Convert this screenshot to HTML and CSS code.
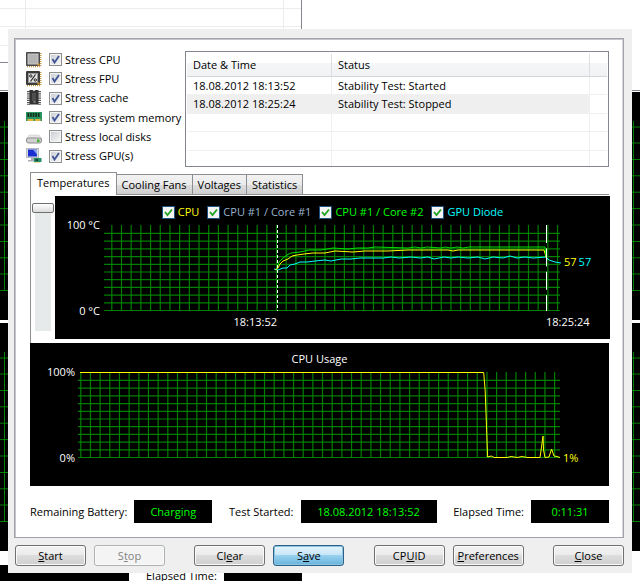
FILE: index.html
```html
<!DOCTYPE html>
<html lang="en">
<head>
    <meta charset="UTF-8">
    <meta name="viewport" content="width=device-width, initial-scale=1.0">
    <title>System Stability Test</title>
    <link rel="stylesheet" href="styles.css">
</head>
<body>
    <!-- Window behind the dialog -->
    <div class="backdrop" aria-hidden="true">
        <div class="back-list">
            <svg width="303" height="90">
                <path d="M0 8.5h301M0 26.5h301M0 45.5h301M25.500 0v62M283.500 0v62" stroke="#ececec" fill="none"/>
                <path d="M0 62.500h301.500V0" stroke="#828790" fill="none"/>
            </svg>
        </div>
        <div class="back-chart">
            <svg viewBox="0 0 640 170" preserveAspectRatio="none">
                <path d="M0 6h640M0 22h640M0 38.500h640M0 54.800h640M0 71.200h640M0 87.600h640M0 104h640M0 120.500h640M0 136.800h640M0 153h640M0 169.500h640M4.500 0v170M633.500 0v170"/>
            </svg>
        </div>
        <div class="back-chart">
            <svg viewBox="0 0 640 170" preserveAspectRatio="none">
                <path d="M0 6h640M0 22h640M0 38.500h640M0 54.800h640M0 71.200h640M0 87.600h640M0 104h640M0 120.500h640M0 136.800h640M0 153h640M0 169.500h640M4.500 0v170M633.500 0v170"/>
            </svg>
        </div>
        <div class="back-status">
            <span class="back-value wide"></span>
            <span class="back-label">Elapsed Time:</span>
            <span class="back-value"></span>
        </div>
    </div>

    <main class="dialog">
        <div class="panel">
            <div class="top-row">
                <ul class="stress-list">
                    <li>
                        <svg class="icon" viewBox="0 0 16 16">
                            <path d="M1 14.500h14M14.700 1v14" stroke="#c79a4a" stroke-width="1.500" stroke-dasharray="1 1" fill="none"/>
                            <rect width="14" height="14" rx="1" fill="#484848"/>
                            <rect x="2" y="2" width="10" height="10" fill="#b4b4b4" stroke="#c8c8c8"/>
                            <rect x="11.500" y="11.500" width="2" height="2" fill="#f0a020"/>
                        </svg>
                        <input type="checkbox" id="cpu" checked><label for="cpu">Stress CPU</label>
                    </li>
                    <li>
                        <svg class="icon" viewBox="0 0 16 16">
                            <path d="M1 14.500h14M14.700 1v14" stroke="#c79a4a" stroke-width="1.500" stroke-dasharray="1 1" fill="none"/>
                            <rect width="14" height="14" rx="1" fill="#3c3c3c"/>
                            <rect x="2.500" y="2.500" width="9" height="9" fill="#e4e4e4" stroke="#999"/>
                            <path d="M9.500 3.500l-5 7" stroke="#222" stroke-width="1.200"/>
                            <circle cx="4.800" cy="5" r="1.200" fill="none" stroke="#222"/>
                            <circle cx="9.300" cy="9" r="1.200" fill="none" stroke="#222"/>
                            <rect x="11.500" y="11.500" width="2" height="2" fill="#f0a020"/>
                        </svg>
                        <input type="checkbox" id="fpu" checked><label for="fpu">Stress FPU</label>
                    </li>
                    <li>
                        <svg class="icon" viewBox="0 0 16 16">
                            <path d="M2.500 1v14M13.500 1v14" stroke="#555" stroke-width="3" stroke-dasharray="1.200 1"/>
                            <rect x="3.500" y="0" width="9" height="14.500" fill="#333"/>
                            <rect x="6" y="3" width="4" height="8" fill="#4e4e4e"/>
                            <path d="M6.500 0h3l-1.500 1.500z" fill="#ccc"/>
                            <rect x="7.500" y="11.500" width="2" height="1" fill="#bbb"/>
                        </svg>
                        <input type="checkbox" id="cache" checked><label for="cache">Stress cache</label>
                    </li>
                    <li>
                        <svg class="icon" viewBox="0 0 16 16">
                            <rect x="0" y="2" width="16" height="9" fill="#2a9461"/>
                            <path d="M1.500 5h13" stroke="#16291e" stroke-width="4" stroke-dasharray="1.600 1"/>
                            <path d="M1.500 10h6M9 10h5.500" stroke="#e3b33c" stroke-width="2"/>
                        </svg>
                        <input type="checkbox" id="memory" checked><label for="memory">Stress system memory</label>
                    </li>
                    <li>
                        <svg class="icon" viewBox="0 0 16 16">
                            <path d="M3 6h10l3 4H0z" fill="#e6e6e6" stroke="#c2c2c2" stroke-width=".5"/>
                            <rect x=".5" y="9" width="15" height="5" rx="2" fill="#d0d0d0" stroke="#8c8c8c"/>
                            <rect x="11" y="10.500" width="2.500" height="2.500" fill="#3fae2e"/>
                        </svg>
                        <input type="checkbox" id="disks"><label for="disks">Stress local disks</label>
                    </li>
                    <li>
                        <svg class="icon" viewBox="0 0 16 16">
                            <rect x=".5" y=".5" width="12" height="9" fill="#d9dde2" stroke="#b5bac0"/>
                            <rect x="2" y="1.500" width="9" height="7" fill="#1c2fd0"/>
                            <path d="M7 1.500h4v5z" fill="#8ea4f0"/>
                            <path d="M5 10h3v2h2v1.500H2V12h3z" fill="#a9aeb5"/>
                            <rect x="8" y="10" width="7.500" height="4" fill="#2a8f68"/>
                            <rect x="9.500" y="11" width="2.500" height="2" fill="#173f33"/>
                            <path d="M8.500 14.500h6" stroke="#d8b54a" stroke-dasharray="1 1"/>
                        </svg>
                        <input type="checkbox" id="gpu" checked><label for="gpu">Stress GPU(s)</label>
                    </li>
                </ul>

                <div class="log">
                    <table>
                        <thead>
                            <tr><th class="col-date">Date &amp; Time</th><th>Status</th><th class="col-end"></th></tr>
                        </thead>
                        <tbody>
                            <tr><td>18.08.2012 18:13:52</td><td>Stability Test: Started</td><td></td></tr>
                            <tr class="selected"><td>18.08.2012 18:25:24</td><td>Stability Test: Stopped</td><td></td></tr>
                            <tr><td></td><td></td><td></td></tr>
                            <tr><td></td><td></td><td></td></tr>
                            <tr><td></td><td></td><td></td></tr>
                        </tbody>
                    </table>
                </div>
            </div>

            <div class="tabs" role="tablist">
                <button class="tab active" role="tab" aria-selected="true">Temperatures</button>
                <button class="tab" role="tab">Cooling Fans</button>
                <button class="tab" role="tab">Voltages</button>
                <button class="tab" role="tab">Statistics</button>
            </div>

            <div class="tab-page">
                <input class="scale" type="range" min="0" max="100" value="0" aria-label="Temperature scale">
                <div class="chart temperature">
                    <div class="legend">
                        <span class="yellow"><input type="checkbox" id="s-cpu" checked><label for="s-cpu">CPU</label></span>
                        <span class="steel"><input type="checkbox" id="s-core1" checked><label for="s-core1">CPU #1 / Core #1</label></span>
                        <span class="green"><input type="checkbox" id="s-core2" checked><label for="s-core2">CPU #1 / Core #2</label></span>
                        <span class="cyan"><input type="checkbox" id="s-gpu" checked><label for="s-gpu">GPU Diode</label></span>
                    </div>
                    <div class="plot-row">
                        <div class="axis"><span>100 °C</span><span>0 °C</span></div>
                        <svg class="plot" viewBox="0 0 458 86" preserveAspectRatio="none">
                            <line class="grid" x1="8.2" y1="43" x2="458" y2="43" stroke-width="86" stroke-dasharray="1.200 8.490"/>
                            <line class="grid" x1="229" y1="7.8" x2="229" y2="86" stroke-width="456" stroke-dasharray="1.200 6.520"/>
                            <polyline class="line-cyan" points="171,44 175,45 180,43 184,43 187,40 192,39 197,37 204,37 212,36 222,35 228,36 238,34 248,34 257,33 270,33 280,33 288,32 296,33 308,32 317,33 325,32 331,34 341,32 348,33 355,32 365,33 375,32 382,34 390,32 400,33 407,31 414,33 422,32 430,33 443,32 446,35 452,37 458,38"/>
                            <polyline class="line-yellow" points="172,45 175,43 177,39 180,36 185,34 189,31 194,30 201,29 210,28 222,28 232,26 250,27 262,26 285,26 305,25 345,25 350,26 355,25 441,25 444,35"/>
                            <polyline class="line-green" points="174,43 176,37 179,34 184,30 188,28 197,27 206,25 218,25 230,23 245,24 254,23 265,23 272,22 305,23 312,22 318,23 324,22 338,23 342,22 348,23 354,22 360,23 366,22 442,22 443,31"/>
                            <line class="mark" x1="174.500" y1="0" x2="174.500" y2="86" stroke-dasharray="3 2"/>
                            <line class="mark" x1="443.500" y1="0" x2="443.500" y2="86" stroke-dasharray="18 5.400"/>
                        </svg>
                        <div class="readout"><span class="yellow">57</span><span class="cyan">57</span></div>
                    </div>
                    <div class="times"><span class="start">18:13:52</span><span class="stop">18:25:24</span></div>
                </div>
            </div>

            <div class="chart usage">
                <div class="chart-title">CPU Usage</div>
                <div class="plot-row">
                    <div class="axis"><span>100%</span><span>0%</span></div>
                    <svg class="plot" viewBox="0 0 483 86" preserveAspectRatio="none">
                        <line class="grid" x1="2.200" y1="43" x2="483" y2="43" stroke-width="86" stroke-dasharray="1.200 8.490"/>
                        <line class="grid" x1="241.500" y1="7.800" x2="241.500" y2="86" stroke-width="483" stroke-dasharray="1.200 6.520"/>
                        <polyline class="line-yellow" points="2,.5 406.500,.5 408,18 410,72 410.500,85 414,84 417,85.500 430,85.500 434,84.500 440,85.500 445,84.500 450,85.500 463,85.500 466,64 466.500,78 468,85.500 472,85 474.500,77 477,84 480,84.500 483,85.500"/>
                    </svg>
                    <div class="readout"><span class="yellow">1%</span></div>
                </div>
            </div>

            <div class="status">
                <div class="field"><span>Remaining Battery:</span><output class="short">Charging</output></div>
                <div class="field"><span>Test Started:</span><output>18.08.2012 18:13:52</output></div>
                <div class="field"><span>Elapsed Time:</span><output class="short">0:11:31</output></div>
            </div>
        </div>

        <div class="buttons">
            <div class="group">
                <button class="btn"><u>S</u>tart</button>
                <button class="btn" disabled>S<u>t</u>op</button>
            </div>
            <div class="group">
                <button class="btn">Cl<u>e</u>ar</button>
                <button class="btn primary">S<u>a</u>ve</button>
            </div>
            <div class="group">
                <button class="btn">CP<u>U</u>ID</button>
                <button class="btn"><u>P</u>references</button>
            </div>
            <div class="group">
                <button class="btn"><u>C</u>lose</button>
            </div>
        </div>
    </main>
</body>
</html>
```
FILE: styles.css
```css
* {
    box-sizing: border-box;
}

body {
    margin: 0;
    position: relative;
    min-height: 100vh;
    display: flow-root;
    background: #fff;
    color: #000;
    font-family: "Open Sans", "Noto Sans", sans-serif;
    font-size: 11px;
    line-height: 14px;
}

button,
input,
output {
    font: inherit;
    margin: 0;
}

/* Window behind the dialog */
.backdrop {
    position: absolute;
    inset: 0;
    overflow: hidden;
    z-index: -1;
}

.back-list {
    height: 91px;
    border-bottom: 1px solid #828790;
    margin-bottom: 1px;
}

.back-list svg {
    display: block;
}

.back-chart {
    height: 228px;
    margin-bottom: 3px;
    padding-top: 29px;
    background: #000;
}

.back-chart svg {
    display: block;
    width: 100%;
    height: 170px;
    fill: none;
    stroke: #008000;
}

.back-status {
    display: flex;
    margin-top: 14px;
}

.back-label {
    padding: 4px 7px 0 17px;
}

.back-value {
    width: 78px;
    height: 23px;
    background: #000;
}

.back-value.wide {
    width: 129px;
}

/* Dialog */
.dialog {
    margin: 29px 8px 8px;
    padding: 9px 8px 7px 6px;
    background: #efefef;
}

.panel {
    padding-bottom: 14px;
    background: #fff;
    border: 1px solid #a0a3ac;
    box-shadow: inset 1px 1px 0 #c4c6cc, inset -1px 0 0 #d8d8dc;
}

.top-row {
    display: flex;
    padding: 12px 14px 0 11px;
}

.stress-list {
    width: 159px;
    height: 116px;
    margin: -1px 0 0;
    padding: 0;
    list-style: none;
    display: flex;
    flex-direction: column;
    justify-content: space-between;
}

.stress-list li {
    display: flex;
    align-items: center;
    flex: 1;
    white-space: nowrap;
}

.icon {
    width: 16px;
    height: 16px;
    margin-right: 7px;
}

input[type="checkbox"] {
    appearance: none;
    width: 13px;
    height: 13px;
    margin-right: 3px;
    border: 1px solid #8e8f8f;
    background: linear-gradient(135deg, #cbcfd5, #f6f6f6) center / 9px 9px no-repeat #f4f4f4;
}

.stress-list input:checked {
    background: url("data:image/svg+xml,%3Csvg xmlns='http://www.w3.org/2000/svg' viewBox='0 0 11 11'%3E%3Cpath d='M2.500 5l2 3.500L9 2' fill='none' stroke='%233f5596' stroke-width='1.800'/%3E%3C/svg%3E") center / 11px 11px no-repeat, linear-gradient(135deg, #cbcfd5, #f6f6f6) center / 9px 9px no-repeat #f4f4f4;
}

/* Event log */
.log {
    flex: 1;
    height: 116px;
    padding: 2px 1px;
    border: 1px solid #828790;
    overflow: hidden;
}

.log table {
    width: 100%;
    table-layout: fixed;
    border-collapse: separate;
    border-spacing: 0;
}

.log th,
.log td {
    height: 18px;
    padding: 0 6px;
    text-align: left;
    font-weight: normal;
    border-right: 1px solid #f0f0f0;
    border-bottom: 1px solid #f0f0f0;
}

.log th {
    height: 23px;
    border-right-color: #dcdee1;
    border-bottom-color: #d5d5d5;
    background: linear-gradient(#fff 40%, #f5f6f8 42%, #f1f2f4);
}

.log tr:nth-child(even) td {
    height: 19px;
}

.log th:last-child,
.log td:last-child {
    border-right: none;
}

.log tbody tr:last-child td {
    height: 16px;
    border-bottom: none;
}

.col-date {
    width: 145px;
}

.col-end {
    width: 17px;
}

.selected td:not(:last-child) {
    background: #efefef;
}

/* Tabs */
.tabs {
    display: flex;
    align-items: flex-end;
    height: 22px;
    margin: 5px 14px 0 15px;
}

.tab {
    height: 20px;
    padding: 0 5px;
    color: #000;
    border: 1px solid #8c8e94;
    border-left: none;
    border-bottom: none;
    background: linear-gradient(#f2f2f2, #ebebeb 50%, #dddddd 50%, #cfcfcf);
}

.tab.active {
    height: 23px;
    margin-bottom: -1px;
    padding: 0 6px 3px;
    border-left: 1px solid #8c8e94;
    background: #fff;
    z-index: 1;
}

.tab-page {
    display: flex;
    margin: 0 14px 0 15px;
    padding: 1px 0 4px 1px;
    border-top: 1px solid #8c8e94;
    border-left: 1px solid #8c8e94;
}

.scale {
    appearance: none;
    writing-mode: vertical-lr;
    width: 22px;
    height: 128px;
    margin: 7px 1px 0 0;
    background: linear-gradient(#e6eaea, #e6eaea) center / 16px 100% no-repeat;
}

.scale::-webkit-slider-thumb {
    appearance: none;
    width: 22px;
    height: 10px;
    border: 1px solid #6f6f6f;
    border-radius: 2px;
    background: linear-gradient(#fff, #dcdcdc);
}

/* Charts */
.chart {
    background: #000;
    color: #fff;
    height: 143px;
}

.temperature {
    flex: 1;
}

.usage {
    margin: 0 14px 0 15px;
}

.legend {
    display: flex;
    justify-content: center;
    gap: 8px;
    padding-top: 9px;
    height: 22px;
}

.legend span {
    display: flex;
    align-items: center;
    height: 14px;
}

.legend input[type="checkbox"] {
    border-color: #1c5180;
    background: #f4f4f4;
}

.legend input:checked {
    background: url("data:image/svg+xml,%3Csvg xmlns='http://www.w3.org/2000/svg' viewBox='0 0 11 11'%3E%3Cpath d='M2 5l2.500 3L9 2.500' fill='none' stroke='%2321a121' stroke-width='1.800'/%3E%3C/svg%3E") center / 11px 11px no-repeat #f4f4f4;
}

.chart-title {
    height: 22px;
    padding-top: 9px;
    text-align: center;
}

.plot-row {
    display: flex;
    height: 100px;
}

.axis {
    display: flex;
    flex-direction: column;
    justify-content: space-between;
    width: 48px;
    padding-right: 3px;
    text-align: right;
}

.plot {
    flex: 1;
    min-width: 0;
    height: 86px;
    margin: 7px 0;
    fill: none;
}

.grid {
    stroke: #008000;
}

.mark {
    stroke: #fff;
}

.line-yellow {
    stroke: #ffff00;
}

.line-green {
    stroke: #00e000;
}

.line-cyan {
    stroke: #00ffff;
}

.readout {
    display: flex;
    gap: 2px;
    width: 49px;
    padding: 37px 0 0 3px;
}

.usage .readout {
    padding-top: 86px;
}

.times {
    display: grid;
    grid-template-columns: minmax(0, 174fr) minmax(0, 269fr) minmax(0, 15fr);
    margin: -3px 49px 0 48px;
    white-space: nowrap;
}

.start {
    text-align: right;
}

.stop {
    grid-column: 3;
}

.yellow {
    color: #ffff00;
}

.steel {
    color: #99b4d1;
}

.green {
    color: #00ff00;
}

.cyan {
    color: #00ffff;
}

/* Status line */
.status {
    display: flex;
    justify-content: space-between;
    margin: 14px 14px 0 15px;
}

.field {
    display: flex;
    align-items: center;
    gap: 7px;
}

.field output {
    width: 136px;
    height: 23px;
    line-height: 23px;
    text-align: center;
    background: #000;
    color: #00ff00;
}

.field .short {
    width: 78px;
}

/* Buttons */
.buttons {
    display: flex;
    justify-content: space-between;
    padding: 7px 0 0 1px;
}

.group {
    display: flex;
    gap: 8px;
}

.btn {
    width: 71px;
    height: 21px;
    padding: 0;
    color: #000;
    border: 1px solid #707070;
    border-radius: 3px;
    background: linear-gradient(#f2f2f2, #ebebeb 50%, #dddddd 50%, #cfcfcf);
    box-shadow: inset 0 0 0 1px #fafafa;
}

.btn:disabled {
    color: #838383;
    border-color: #adb2b5;
    background: #f4f4f4;
}

.btn.primary {
    border-color: #2c628b;
    background: linear-gradient(#e5f4fc, #c4e5f6 50%, #98d1ef 50%, #68b3db);
    box-shadow: inset 0 0 0 1px #8cc4e0;
}
```
